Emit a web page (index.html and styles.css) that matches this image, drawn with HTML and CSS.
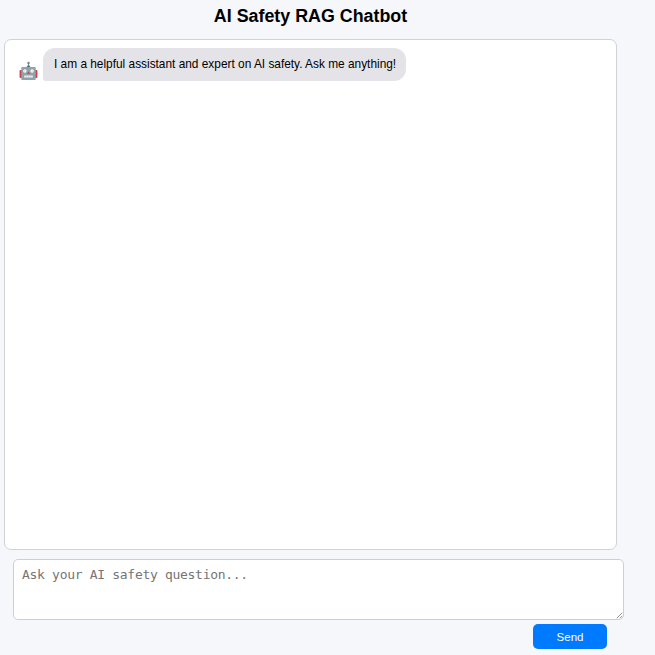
FILE: index.html
```
<!DOCTYPE html>
<html lang="en">
<head>
<meta charset="utf-8">
<title>AI Safety RAG Chatbot</title>
<link rel="stylesheet" href="styles.css">
</head>
<body>
<main class="app">
  <h1 class="title">AI Safety RAG Chatbot</h1>
  <section class="chat">
    <div class="message">
      <svg class="avatar" viewBox="0 0 20 20" preserveAspectRatio="none" aria-hidden="true">
        <rect x="0.6" y="9" width="3" height="8" rx="1" fill="#c9434f"/>
        <rect x="16.4" y="9" width="3" height="8" rx="1" fill="#c9434f"/>
        <path d="M10 2v4" stroke="#78909c" stroke-width="1.2"/>
        <circle cx="10" cy="1.9" r="1.2" fill="#86727d"/>
        <path d="M7.8 6.2L9 4.6h2l1.2 1.6z" fill="#546e7a"/>
        <rect x="2.4" y="6" width="15.2" height="13" rx="1" fill="#8fa3ad"/>
        <circle cx="6.2" cy="10" r="1.8" fill="#fff"/>
        <circle cx="13.8" cy="10" r="1.8" fill="#fff"/>
        <circle cx="6.2" cy="10" r=".6" fill="#c99a85"/>
        <circle cx="13.8" cy="10" r=".6" fill="#c99a85"/>
        <path d="M10 10.4l1.5 2.6h-3z" fill="#c9434f"/>
        <rect x="5.4" y="14.6" width="9.2" height="2" rx=".6" fill="#f0f0ee"/>
        <path d="M7.7 14.6v2M10 14.6v2M12.3 14.6v2" stroke="#b4bdc0" stroke-width=".5"/>
      </svg>
      <div class="bubble"><span class="message-text">I am a helpful assistant and expert on AI safety. Ask me anything!</span></div>
    </div>
  </section>
  <form class="composer">
    <div class="field">
      <textarea class="input" placeholder="Ask your AI safety question..."></textarea>
      <svg class="grip" viewBox="0 0 8 8" aria-hidden="true"><path d="M.8 7.2L7.2.8M4.4 7.2L7.2 4.4" stroke="#777" stroke-width=".9"/></svg>
    </div>
    <button class="send" type="button">Send</button>
  </form>
</main>
</body>
</html>
```
FILE: styles.css
```
* { box-sizing: border-box; }
body {
  margin: 0;
  height: 655px;
  overflow: hidden;
  background: #f5f7fb;
  color: #000;
  font-family: "Liberation Sans", Arial, sans-serif;
  font-size: 13.5px;
}
.app {
  display: flex;
  flex-direction: column;
  width: 613px;
  margin-left: 4px;
}
.title {
  margin: 0;
  padding-top: 5px;
  height: 39px;
  font-size: 17.85px;
  line-height: 23px;
  text-align: center;
}
.chat {
  height: 511px;
  padding: 8px 14px;
  background: #fff;
  border: 1px solid #cfd2d6;
  border-radius: 7px;
}
.message {
  display: flex;
  align-items: flex-end;
  gap: 5px;
}
.avatar { width: 19px; height: 20px; }
.bubble {
  width: 363px;
  height: 33px;
  padding: 0 11px;
  line-height: 32px;
  background: #e4e4e8;
  border-radius: 12px 12px 12px 3px;
  white-space: nowrap;
}
.message-text {
  display: inline-block;
  transform: scaleX(.879);
  transform-origin: left center;
}
.composer {
  display: flex;
  flex-direction: column;
  padding: 9px 0 0 9px;
}
.field {
  position: relative;
  width: 611px;
  height: 61px;
}
.input {
  display: block;
  width: 100%;
  height: 100%;
  padding: 7px 8px;
  border: 1px solid #cccfd3;
  border-radius: 5px;
  background: #fff;
  font: 13px/16px "DejaVu Sans Mono", monospace;
  letter-spacing: -.3px;
  resize: none;
  outline: none;
}
.input::placeholder { color: #757575; }
.grip {
  position: absolute;
  right: 1px;
  bottom: 1px;
  width: 7px;
  height: 7px;
}
.send {
  align-self: flex-end;
  width: 74px;
  height: 25px;
  margin: 4px 10px 0 0;
  padding: 1px 0 0;
  border: 0;
  border-radius: 5px;
  background: #007bff;
  color: #fff;
  font: 11.5px/24px "Liberation Sans", Arial, sans-serif;
}
```
